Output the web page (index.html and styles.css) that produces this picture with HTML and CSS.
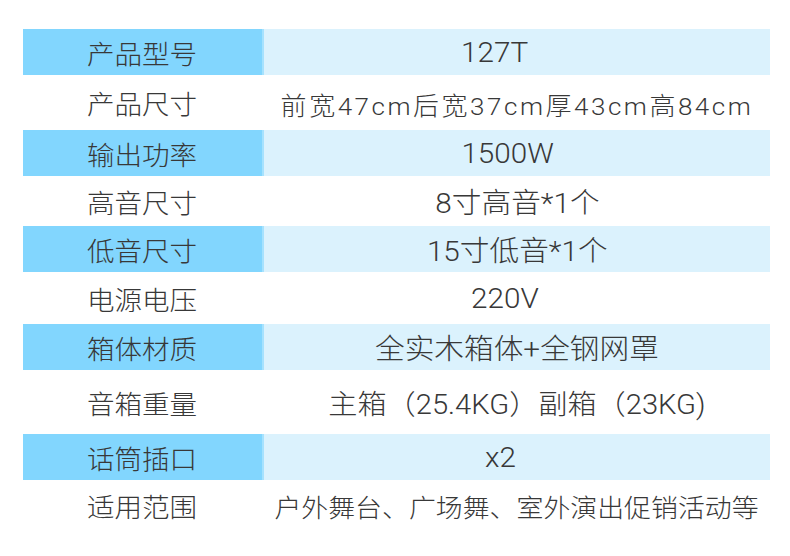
FILE: index.html
```html
<!DOCTYPE html>
<html lang="zh-CN">
<head>
<meta charset="utf-8">
<title>产品参数</title>
<link rel="stylesheet" href="styles.css">
</head>
<body>
<div class="spec">
  <div class="row alt h46"><div class="label"><span class="t">产品型号</span></div><div class="value pr44"><span class="t">127T</span></div></div>
  <div class="row h55"><div class="label"><span class="t">产品尺寸</span></div><div class="value small"><span class="t">前宽47cm后宽37cm厚43cm高84cm</span></div></div>
  <div class="row alt h46"><div class="label"><span class="t">输出功率</span></div><div class="value pr18"><span class="t">1500W</span></div></div>
  <div class="row h50"><div class="label"><span class="t">高音尺寸</span></div><div class="value"><span class="t">8寸高音*1个</span></div></div>
  <div class="row alt h46"><div class="label"><span class="t">低音尺寸</span></div><div class="value"><span class="t">15寸低音*1个</span></div></div>
  <div class="row h52"><div class="label"><span class="t">电源电压</span></div><div class="value pr24"><span class="t">220V</span></div></div>
  <div class="row alt h46"><div class="label"><span class="t">箱体材质</span></div><div class="value"><span class="t">全实木箱体+全钢网罩</span></div></div>
  <div class="row h64"><div class="label"><span class="t">音箱重量</span></div><div class="value weight"><span class="t">主箱（25.4KG）副箱（23KG)</span></div></div>
  <div class="row alt h46"><div class="label"><span class="t">话筒插口</span></div><div class="value pr32"><span class="t">x2</span></div></div>
  <div class="row h50"><div class="label"><span class="t">适用范围</span></div><div class="value medium"><span class="t">户外舞台、广场舞、室外演出促销活动等</span></div></div>
</div>
</body>
</html>
```

FILE: styles.css
```css
html, body {
  margin: 0;
  padding: 0;
  background: #ffffff;
}

body {
  font-family: "Roboto", "Noto Sans CJK SC", sans-serif;
  color: #383838;
  font-weight: 300;
}

.spec {
  width: 747px;
  margin-left: 23px;
  padding-top: 29px;
}

.row {
  display: grid;
  grid-template-columns: 241px 1fr;
}

.h46 { height: 46px; }
.h50 { height: 50px; }
.h52 { height: 52px; }
.h55 { height: 55px; }
.h64 { height: 64px; }

.label,
.value {
  display: flex;
  align-items: center;
  justify-content: center;
  white-space: nowrap;
}

.label {
  font-size: 26px;
}

.value {
  font-size: 28px;
}

.value.small {
  font-size: 24.5px;
  letter-spacing: 2.4px;
  padding-top: 4px;
}

.value.medium {
  font-size: 25.5px;
}

.value.weight {
  font-size: 27.5px;
}

.row.alt .label {
  background: #82d6fe;
  border-right: 2px solid #a6e2fe;
}

.row.alt .value {
  background: #dbf2fd;
}

.row:not(.alt) .label {
  border-right: 2px solid transparent;
}

.t {
  display: inline-block;
  transform: scaleX(1.06);
}

.medium .t {
  transform: scaleX(1.055);
}

.pr44 { padding-right: 44px; }
.pr32 { padding-right: 32px; }
.pr24 { padding-right: 24px; }
.pr18 { padding-right: 18px; }
```
